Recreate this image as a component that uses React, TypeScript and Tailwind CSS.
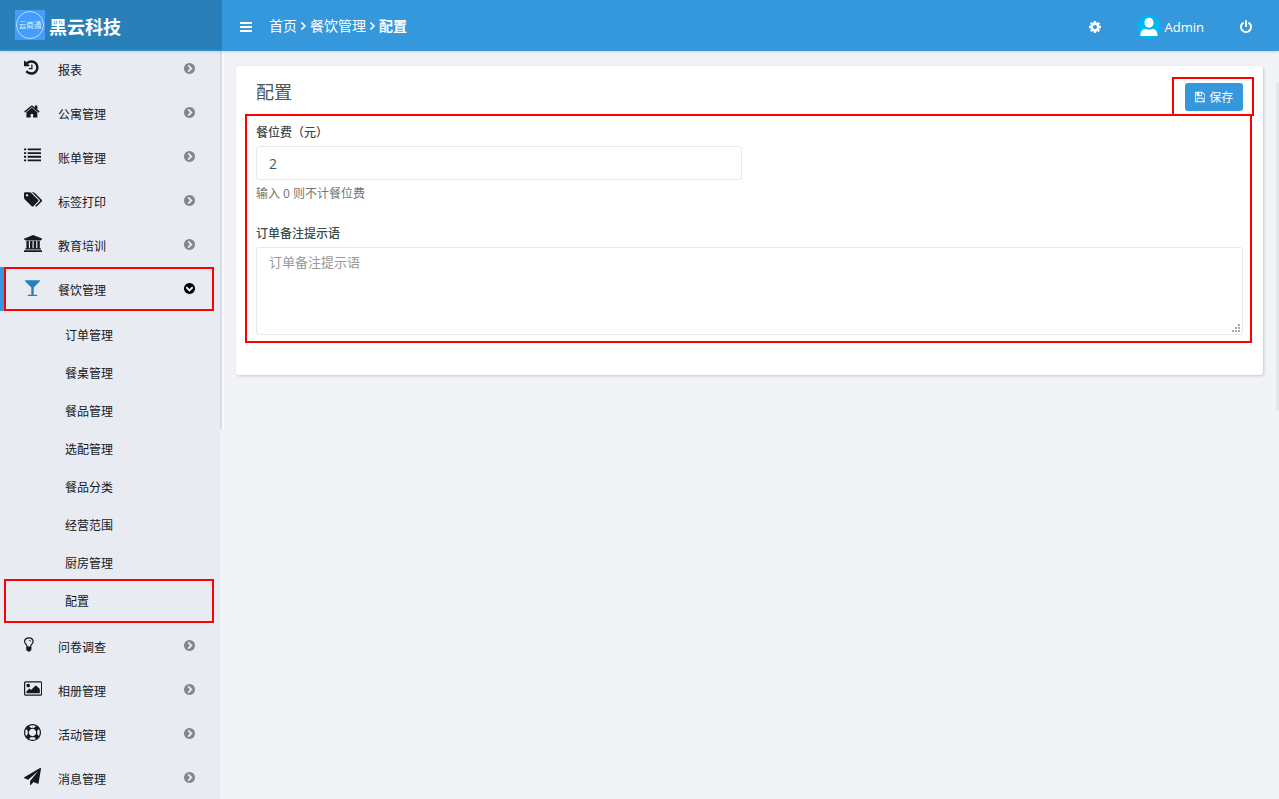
import { useState } from "react";
import { twMerge } from "tailwind-merge";

interface IconShape {
  viewBox: string;
  path: string;
}

interface MenuItemType {
  name: string;
  icon: IconShape;
  children?: string[];
}

const ICONS = {
  history: {
    viewBox: "128 0 1536 1792",
    path: "M1664 896q0 156-61 298t-164 245-245 164-298 61q-172 0-327-72.5t-264-204.5q-7-10-6.5-22.5t8.5-20.5l137-138q10-9 25-9 16 2 23 12 73 95 179 147t225 52q104 0 198.5-40.5t163.5-109.5 109.5-163.5 40.5-198.5-40.5-198.5-109.5-163.5-163.5-109.5-198.5-40.5q-98 0-188 35.5t-160 101.5l137 138q31 30 14 69-17 40-59 40h-448q-26 0-45-19t-19-45v-448q0-42 40-59 39-17 69 14l130 129q107-101 244.5-156.5t284.5-55.5q156 0 298 61t245 164 164 245 61 298zm-640-288v448q0 14-9 23t-23 9h-320q-14 0-23-9t-9-23v-64q0-14 9-23t23-9h224v-352q0-14 9-23t23-9h64q14 0 23 9t9 23z",
  },
  home: {
    viewBox: "64 0 1664 1792",
    path: "M1472 992v480q0 26-19 45t-45 19h-384v-384h-256v384h-384q-26 0-45-19t-19-45v-480q0-1 .5-3t.5-3l575-474 575 474q1 2 1 6zm223-69l-62 74q-8 9-21 11h-3q-13 0-21-7l-692-577-692 577q-12 8-24 7-13-2-21-11l-62-74q-8-10-7-23.5t11-21.5l719-599q32-26 76-26t76 26l244 204v-195q0-14 9-23t23-9h192q14 0 23 9t9 23v408l219 182q10 8 11 21.5t-7 23.5z",
  },
  list: {
    viewBox: "0 0 1792 1792",
    path: "M0 1312h224v192h-224zM0 928h224v192h-224zM0 544h224v192h-224zM0 160h224v192h-224zM384 1312h1408v192h-1408zM384 928h1408v192h-1408zM384 544h1408v192h-1408zM384 160h1408v192h-1408z",
  },
  tags: {
    viewBox: "0 0 1920 1792",
    path: "M448 448q0-53-37.5-90.5t-90.5-37.5-90.5 37.5-37.5 90.5 37.5 90.5 90.5 37.5 90.5-37.5 37.5-90.5zm1067 576q0 53-37 90l-491 492q-39 37-91 37-53 0-90-37l-715-716q-38-37-64.5-101t-26.5-117v-416q0-52 38-90t90-38h416q53 0 117 26.5t102 64.5l715 714q37 39 37 91zm384 0q0 53-37 90l-491 492q-39 37-91 37-36 0-59-14t-53-45l470-470q37-37 37-90 0-52-37-91l-715-714q-38-38-102-64.5t-117-26.5h224q53 0 117 26.5t102 64.5l715 714q37 39 37 91z",
  },
  university: {
    viewBox: "0 0 1920 1792",
    path: "M960 0l960 384v128h-128q0 26-20.5 45t-48.5 19h-1526q-28 0-48.5-19t-20.5-45h-128v-128zm-704 640h256v768h128v-768h256v768h128v-768h256v768h128v-768h256v768h59q28 0 48.5 19t20.5 45v64h-1664v-64q0-26 20.5-45t48.5-19h59v-768zm1595 960q28 0 48.5 19t20.5 45v128h-1920v-128q0-26 20.5-45t48.5-19h1782z",
  },
  glass: {
    viewBox: "0 0 1792 1792",
    path: "M1699 186q0 35-43 78l-632 632v768h320q26 0 45 19t19 45-19 45-45 19h-896q-26 0-45-19t-19-45 19-45 45-19h320v-768l-632-632q-43-43-43-78 0-23 18-36.5t38-17.5 43-4h1408q23 0 43 4t38 17.5 18 36.5z",
  },
  lightbulb: {
    viewBox: "384 0 1024 1792",
    path: "M1120 576q0 13-9.5 22.5t-22.5 9.5-22.5-9.5-9.5-22.5q0-46-54-71t-106-25q-13 0-22.5-9.5t-9.5-22.5 9.5-22.5 22.5-9.5q50 0 99.5 16t87 54 37.5 90zm160 0q0-72-34.5-134t-90-101.5-123-62-136.5-22.5-136.5 22.5-123 62-90 101.5-34.5 134q0 101 68 180 10 11 30.5 33t30.5 33q128 153 141 298h228q13-145 141-298 10-11 30.5-33t30.5-33q68-79 68-180zm128 0q0 155-103 268-45 49-74.5 87t-59.5 95.5-34 107.5q47 28 47 82 0 37-25 64 25 27 25 64 0 52-45 81 13 23 13 47 0 46-31.5 71t-77.5 25q-20 44-60 70t-87 26-87-26-60-70q-46 0-77.5-25t-31.5-71q0-24 13-47-45-29-45-81 0-37 25-64-25-27-25-64 0-54 47-82-4-50-34-107.5t-59.5-95.5-74.5-87q-103-113-103-268 0-99 44.5-184.5t117-142 164-89 186.5-32.5 186.5 32.5 164 89 117 142 44.5 184.5z",
  },
  image: {
    viewBox: "-64 0 1920 1792",
    path: "M576 576q0 80-56 136t-136 56-136-56-56-136 56-136 136-56 136 56 56 136zm1024 384v448h-1408v-192l320-320 160 160 512-512zm96-704h-1600q-13 0-22.5 9.5t-9.5 22.5v1216q0 13 9.5 22.5t22.5 9.5h1600q13 0 22.5-9.5t9.5-22.5v-1216q0-13-9.5-22.5t-22.5-9.5zm160 32v1216q0 66-47 113t-113 47h-1600q-66 0-113-47t-47-113v-1216q0-66 47-113t113-47h1600q66 0 113 47t47 113z",
  },
  lifeRing: {
    viewBox: "0 0 1792 1792",
    path: "M896 0q182 0 348 71t286 191 191 286 71 348-71 348-191 286-286 191-348 71-348-71-286-191-191-286-71-348 71-348 191-286 286-191 348-71zm0 128q-190 0-361 90l194 194q82-28 167-28t167 28l194-194q-171-90-361-90zm-678 1129l194-194q-28-82-28-167t28-167l-194-194q-90 171-90 361t90 361zm678 407q190 0 361-90l-194-194q-82 28-167 28t-167-28l-194 194q171 90 361 90zm0-384q159 0 271.5-112.5t112.5-271.5-112.5-271.5-271.5-112.5-271.5 112.5-112.5 271.5 112.5 271.5 271.5 112.5zm484-217l194 194q90-171 90-361t-90-361l-194 194q28 82 28 167t-28 167z",
  },
  paperPlane: {
    viewBox: "0 0 1792 1792",
    path: "M1764 11q33 24 27 64l-256 1536q-5 29-32 45-14 8-31 8-11 0-24-5l-453-185-242 295q-18 23-49 23-13 0-22-4-19-7-30.5-23.5t-11.5-36.5v-349l864-1059-1069 925-395-162q-37-14-40-55-2-40 32-59l1664-960q15-9 32-9 20 0 36 11z",
  },
  bars: {
    viewBox: "128 0 1536 1792",
    path: "M1664 1344v128q0 26-19 45t-45 19h-1408q-26 0-45-19t-19-45v-128q0-26 19-45t45-19h1408q26 0 45 19t19 45zm0-512v128q0 26-19 45t-45 19h-1408q-26 0-45-19t-19-45v-128q0-26 19-45t45-19h1408q26 0 45 19t19 45zm0-512v128q0 26-19 45t-45 19h-1408q-26 0-45-19t-19-45v-128q0-26 19-45t45-19h1408q26 0 45 19t19 45z",
  },
  cog: {
    viewBox: "128 0 1536 1792",
    path: "M1152 896q0-106-75-181t-181-75-181 75-75 181 75 181 181 75 181-75 75-181zm512-109v222q0 12-8 23t-20 13l-185 28q-19 54-39 91 35 50 107 138 10 12 10 25t-9 23q-27 37-99 108t-94 71q-12 0-26-9l-138-108q-44 23-91 38-16 136-29 186-7 28-36 28h-222q-14 0-24.5-8.5t-11.5-21.5l-28-184q-49-16-90-37l-141 107q-10 9-25 9-14 0-25-11-126-114-165-168-7-10-7-23 0-12 8-23 15-21 51-66.5t54-70.5q-27-50-41-99l-183-27q-13-2-21-12.5t-8-23.5v-222q0-12 8-23t19-13l186-28q14-46 39-92-40-57-107-138-10-12-10-24 0-10 9-23 26-36 98.5-107.5t94.5-71.5q13 0 26 10l138 107q44-23 91-38 16-136 29-186 7-28 36-28h222q14 0 24.5 8.5t11.5 21.5l28 184q49 16 90 37l142-107q9-9 24-9 13 0 25 10 129 119 165 170 7 8 7 22 0 12-8 23-15 21-51 66.5t-54 70.5q26 50 41 98l183 28q13 2 21 12.5t8 23.5z",
  },
  power: {
    viewBox: "128 0 1536 1792",
    path: "M1664 896q0 156-61 298t-164 245-245 164-298 61-298-61-245-164-164-245-61-298q0-182 80.5-343t226.500-270q43-32 95.500-25t83.500 50q32 42 24.500 94.500t-49.500 84.500q-98 74-151.500 181t-53.500 228q0 104 40.500 198.500t109.500 163.500 163.500 109.500 198.500 40.500 198.500-40.500 163.500-109.500 109.500-163.500 40.500-198.500q0-121-53.500-228t-151.500-181q-42-32-49.500-84.500t24.500-94.500q31-43 84-50t95 25q146 109 226.500 270t80.500 343zm-640-768v640q0 52-38 90t-90 38-90-38-38-90v-640q0-52 38-90t90-38 90 38 38 90z",
  },
  save: {
    viewBox: "128 0 1536 1792",
    path: "M512 1536h768v-384h-768v384zm896 0h128v-896q0-14-10-38.5t-20-34.5l-281-281q-10-10-34-20t-39-10v416q0 40-28 68t-68 28h-576q-40 0-68-28t-28-68v-416h-128v1280h128v-416q0-40 28-68t68-28h832q40 0 68 28t28 68v416zm-384-928v-320q0-13-9.5-22.5t-22.5-9.5h-192q-13 0-22.5 9.5t-9.5 22.5v320q0 13 9.5 22.5t22.5 9.5h192q13 0 22.5-9.5t9.5-22.5zm640 32v928q0 40-28 68t-68 28h-1344q-40 0-68-28t-28-68v-1344q0-40 28-68t68-28h928q40 0 88 20t76 48l280 280q28 28 48 76t20 88z",
  },
  chevronCircle: {
    viewBox: "128 128 1536 1536",
    path: "M845 1395l454-454q19-19 19-45t-19-45l-454-454q-19-19-45-19t-45 19l-102 102q-19 19-19 45t19 45l307 307-307 307q-19 19-19 45t19 45l102 102q19 19 45 19t45-19zm819-499q0 209-103 385.5t-279.5 279.5-385.5 103-385.5-103-279.5-279.5-103-385.5 103-385.5 279.5-279.5 385.5-103 385.5 103 279.5 279.5 103 385.5z",
  },
  angleRight: {
    viewBox: "576 384 640 1024",
    path: "M1171 896q0 13-10 23l-466 466q-10 10-23 10t-23-10l-50-50q-10-10-10-23t10-23l393-393-393-393q-10-10-10-23t10-23l50-50q10-10 23-10t23 10l466 466q10 10 10 23z",
  },
};

const MENU: MenuItemType[] = [
  { name: "报表", icon: ICONS.history },
  { name: "公寓管理", icon: ICONS.home },
  { name: "账单管理", icon: ICONS.list },
  { name: "标签打印", icon: ICONS.tags },
  { name: "教育培训", icon: ICONS.university },
  {
    name: "餐饮管理",
    icon: ICONS.glass,
    children: [
      "订单管理",
      "餐桌管理",
      "餐品管理",
      "选配管理",
      "餐品分类",
      "经营范围",
      "厨房管理",
      "配置",
    ],
  },
  { name: "问卷调查", icon: ICONS.lightbulb },
  { name: "相册管理", icon: ICONS.image },
  { name: "活动管理", icon: ICONS.lifeRing },
  { name: "消息管理", icon: ICONS.paperPlane },
];

const Icon = ({ icon, className }: { icon: IconShape; className?: string }) => (
  <svg
    viewBox={icon.viewBox}
    fill="currentColor"
    aria-hidden="true"
    className={twMerge("h-3.5 w-auto shrink-0", className)}
  >
    <path d={icon.path} />
  </svg>
);

const Highlight = ({ className }: { className?: string }) => (
  <span
    className={twMerge(
      "absolute border-2 border-[#ff0000] pointer-events-none",
      className,
    )}
  />
);

const Brand = () => (
  <a
    href="#"
    className="flex h-[50px] w-[222px] shrink-0 items-center gap-1 bg-[#2980b9] pl-[15px] text-lg font-bold"
  >
    <svg viewBox="0 0 30 30" className="size-[30px]">
      <rect width="30" height="30" fill="#449dfb" />
      <circle cx="15" cy="15" r="13.5" fill="none" stroke="#b9dcff" />
      <text
        x="15"
        y="18"
        textAnchor="middle"
        fontSize="7.5"
        fontWeight="400"
        fill="#e3f1ff"
      >
        云商通
      </text>
    </svg>
    <span className="pt-1">黑云科技</span>
  </a>
);

const Header = () => (
  <header className="relative z-10 flex h-[51px] items-start bg-[#3598dc] text-white shadow-sm">
    <Brand />
    <div className="flex h-[53px] flex-1 items-center pl-[18px] pr-[27px]">
      <button type="button" aria-label="Menu">
        <Icon icon={ICONS.bars} />
      </button>
      <nav className="flex items-center gap-1 pb-0.5 pl-[17px] text-sm">
        <a href="#">首页</a>
        <Icon icon={ICONS.angleRight} className="h-2 stroke-white stroke-[80px]" />
        <a href="#">餐饮管理</a>
        <Icon icon={ICONS.angleRight} className="h-2 stroke-white stroke-[80px]" />
        <a href="#" className="font-bold">
          配置
        </a>
      </nav>
      <div className="ml-auto flex items-center gap-9">
        <button type="button" aria-label="Settings">
          <Icon icon={ICONS.cog} />
        </button>
        <a href="#" className="flex items-center gap-1 text-[13px]">
          <svg viewBox="0 0 24 24" className="size-6">
            <circle cx="12" cy="12" r="12" fill="#00b7f1" />
            <ellipse cx="12" cy="7.8" rx="4.6" ry="5" fill="#fff" />
            <path
              d="M3.4 21c0-4.800 2-6.600 5-7.200 2 1.300 5.200 1.300 7.200 0 3 .6 5 2.400 5 7.200z"
              fill="#fff"
            />
          </svg>
          <span className="pt-0.5">Admin</span>
        </a>
        <button type="button" aria-label="Log out">
          <Icon icon={ICONS.power} />
        </button>
      </div>
    </div>
  </header>
);

const MenuItem = ({ item }: { item: MenuItemType }) => {
  const isOpen = Boolean(item.children);

  return (
    <li>
      <a
        href="#"
        className={twMerge(
          "relative flex h-11 items-center pl-6 pr-[25px]",
          isOpen ? "border-l-4 border-[#3598dc] pl-5" : "",
        )}
      >
        <span className="w-[34px] pb-1">
          <Icon
            icon={item.icon}
            className={twMerge("h-[17px]", isOpen ? "text-[#2980b9]" : "")}
          />
        </span>
        <span className="pt-1">{item.name}</span>
        <Icon
          icon={ICONS.chevronCircle}
          className={twMerge(
            "mb-0.5 ml-auto h-[11px]",
            isOpen ? "rotate-90 text-black" : "text-[#80858f]",
          )}
        />
        {isOpen && <Highlight className="inset-y-0 left-0 right-1.5" />}
      </a>
      {item.children && (
        <ul className="pb-1 pt-[5px]">
          {item.children.map((name) => (
            <li key={name}>
              <a
                href="#"
                className="relative flex h-[38px] items-center pl-[65px] pt-0.5"
              >
                {name}
                {name === "配置" && (
                  <Highlight className="-inset-y-[3px] left-1 right-1.5" />
                )}
              </a>
            </li>
          ))}
        </ul>
      )}
    </li>
  );
};

const Sidebar = () => (
  <aside className="relative w-[220px] shrink-0 bg-[#e8ebf2] text-xs text-[#15181c]">
    <ul className="-mt-1">
      {MENU.map((item) => (
        <MenuItem key={item.name} item={item} />
      ))}
    </ul>
    <div className="absolute left-full top-0 h-[378px] w-1 border-l-2 border-[#d9dce1] bg-[#f8f9fb]" />
  </aside>
);

const SettingsForm = () => {
  const [fee, setFee] = useState("2");
  const [note, setNote] = useState("");

  return (
    <form className="rounded-[3px] bg-white px-5 pb-10 pt-[17px] text-xs text-[#3c4a4a] shadow-[1px_1px_3px_rgba(0,0,0,0.18)]">
      <div className="flex justify-between">
        <h1 className="text-lg leading-[18px] text-[#4d5656]">配置</h1>
        <div className="relative">
          <button
            type="submit"
            className="flex h-7 w-[58px] items-center justify-center gap-1 rounded-[3px] bg-[#3598dc] text-white"
          >
            <Icon icon={ICONS.save} className="h-3" />
            <span className="pt-0.5">保存</span>
          </button>
          <Highlight className="-bottom-[5px] -left-[13px] -right-[11px] -top-1.5" />
        </div>
      </div>
      <div className="relative pt-3">
        <label htmlFor="fee" className="block leading-5 font-medium">
          餐位费（元）
        </label>
        <div className="w-1/2 pr-2">
          <input
            id="fee"
            value={fee}
            onChange={(e) => setFee(e.target.value)}
            className="mt-[3px] block h-[34px] w-full rounded-[3px] border border-[#e5e9e9] px-3 text-sm text-[#4d5656]"
          />
        </div>
        <p className="pt-1 leading-5 text-[#737373]">输入 0 则不计餐位费</p>
        <label htmlFor="note" className="mt-5 block leading-5 font-medium">
          订单备注提示语
        </label>
        <div className="relative mt-[3px]">
          <textarea
            id="note"
            value={note}
            onChange={(e) => setNote(e.target.value)}
            placeholder="订单备注提示语"
            className="block h-[88px] w-full resize-none rounded-[3px] border border-[#e5e9e9] px-3 py-[5px] text-[13px] leading-[18px] placeholder:text-[#999999]"
          />
          <svg
            viewBox="0 0 9 9"
            fill="#a9a9a9"
            className="absolute bottom-[2px] right-[2px] size-[9px]"
          >
            <path d="M6 0h2v2h-2zM6 3h2v2h-2zM3 3h2v2h-2zM6 6h2v2h-2zM3 6h2v2h-2zM0 6h2v2h-2z" />
          </svg>
        </div>
        <Highlight className="-bottom-2 -left-[11px] -right-[9px] top-[3px]" />
      </div>
    </form>
  );
};

export default function App() {
  return (
    <div className="flex h-screen flex-col overflow-hidden bg-[#f1f3f7] font-['Open_Sans','Noto_Sans_CJK_SC',sans-serif]">
      <Header />
      <div className="relative flex min-h-0 flex-1">
        <Sidebar />
        <main className="flex-1 px-4 pt-[15px]">
          <SettingsForm />
        </main>
        <div className="absolute right-0 top-8 h-[328px] w-[3px] bg-[#e4e5eb]" />
      </div>
    </div>
  );
}
